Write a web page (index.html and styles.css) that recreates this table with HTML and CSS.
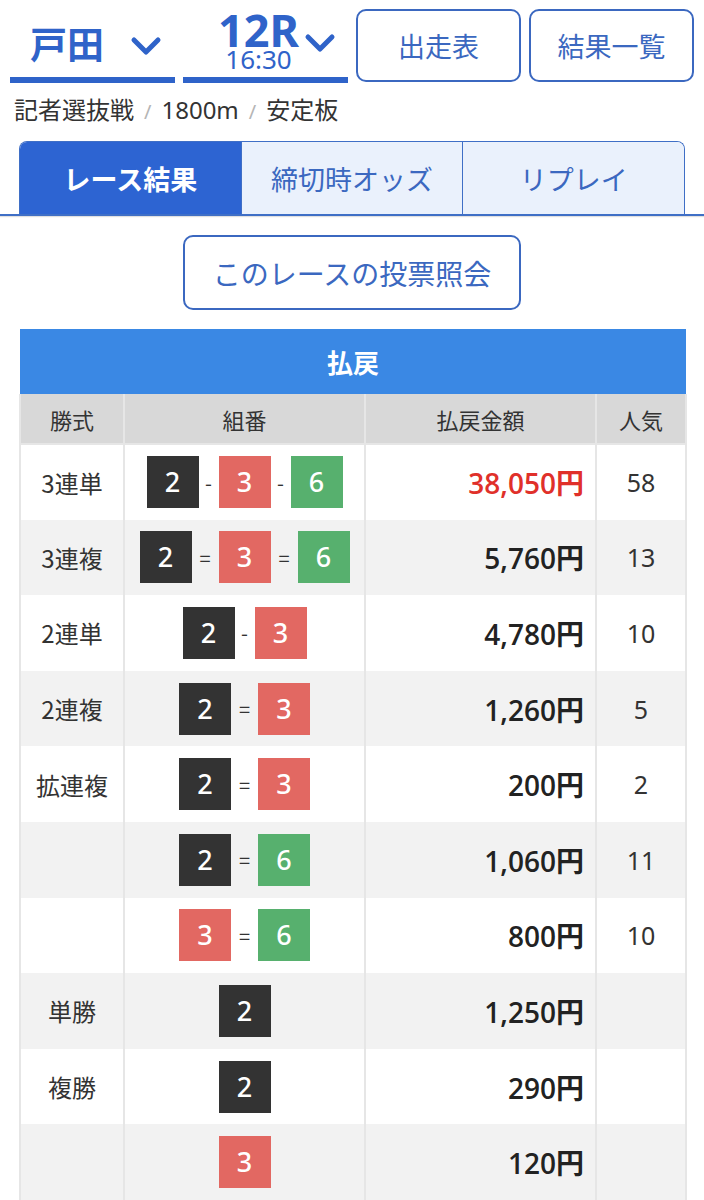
FILE: index.html
```html
<!DOCTYPE html>
<html lang="ja">
<head>
<meta charset="utf-8">
<link rel="stylesheet" href="styles.css">
</head>
<body>
<div class="page">
  <div class="topbar">
    <div class="sel sel-place">
      <span class="place">戸田</span>
      <svg class="chev chev1" width="32" height="22" viewBox="0 0 32 22"><polyline points="4,5 16,17 28,5" fill="none" stroke="#2f63c9" stroke-width="5" stroke-linecap="round" stroke-linejoin="round"/></svg>
    </div>
    <div class="sel sel-race">
      <span class="race"><span class="rno">12R</span><span class="rtime">16:30</span></span>
      <svg class="chev chev2" width="32" height="22" viewBox="0 0 32 22"><polyline points="4,5 16,17 28,5" fill="none" stroke="#2f63c9" stroke-width="5" stroke-linecap="round" stroke-linejoin="round"/></svg>
    </div>
    <a class="btn">出走表</a>
    <a class="btn">結果一覧</a>
  </div>
  <div class="sub">記者選抜戦<span class="sl">/</span>1800m<span class="sl">/</span>安定板</div>
  <div class="tabwrap">
    <div class="tabs">
      <div class="tab active">レース結果</div>
      <div class="tab">締切時オッズ</div>
      <div class="tab">リプレイ</div>
    </div>
  </div>
  <div class="votewrap"><a class="vote">このレースの投票照会</a></div>
  <table class="pay">
    <colgroup><col class="c1"><col class="c2"><col class="c3"><col class="c4"></colgroup>
    <thead>
      <tr><th colspan="4" class="title">払戻</th></tr>
      <tr class="hd"><th>勝式</th><th>組番</th><th>払戻金額</th><th>人気</th></tr>
    </thead>
    <tbody>
      <tr><td class="kind">3連単</td><td class="combo"><span class="b k">2</span><span class="sep">-</span><span class="b r">3</span><span class="sep">-</span><span class="b g">6</span></td><td class="amt red">38,050円</td><td class="pop">58</td></tr>
      <tr class="alt"><td class="kind">3連複</td><td class="combo"><span class="b k">2</span><span class="sep eq">=</span><span class="b r">3</span><span class="sep eq">=</span><span class="b g">6</span></td><td class="amt">5,760円</td><td class="pop">13</td></tr>
      <tr><td class="kind">2連単</td><td class="combo"><span class="b k">2</span><span class="sep">-</span><span class="b r">3</span></td><td class="amt">4,780円</td><td class="pop">10</td></tr>
      <tr class="alt"><td class="kind">2連複</td><td class="combo"><span class="b k">2</span><span class="sep eq">=</span><span class="b r">3</span></td><td class="amt">1,260円</td><td class="pop">5</td></tr>
      <tr><td class="kind">拡連複</td><td class="combo"><span class="b k">2</span><span class="sep eq">=</span><span class="b r">3</span></td><td class="amt">200円</td><td class="pop">2</td></tr>
      <tr class="alt"><td class="kind"></td><td class="combo"><span class="b k">2</span><span class="sep eq">=</span><span class="b g">6</span></td><td class="amt">1,060円</td><td class="pop">11</td></tr>
      <tr><td class="kind"></td><td class="combo"><span class="b r">3</span><span class="sep eq">=</span><span class="b g">6</span></td><td class="amt">800円</td><td class="pop">10</td></tr>
      <tr class="alt"><td class="kind">単勝</td><td class="combo"><span class="b k">2</span></td><td class="amt">1,250円</td><td class="pop"></td></tr>
      <tr><td class="kind">複勝</td><td class="combo"><span class="b k">2</span></td><td class="amt">290円</td><td class="pop"></td></tr>
      <tr class="alt"><td class="kind"></td><td class="combo"><span class="b r">3</span></td><td class="amt">120円</td><td class="pop"></td></tr>
    </tbody>
  </table>
</div>
</body>
</html>
```
FILE: styles.css
```css
* { box-sizing: border-box; }
body {
  margin: 0;
  background: #fff;
  font-family: "Noto Sans CJK JP", "Noto Sans", sans-serif;
  color: #333;
}
.page { width: 704px; }
.topbar {
  display: flex;
  gap: 8px;
  padding: 9px 10px 0 10px;
  height: 83px;
}
.sel {
  width: 165px;
  height: 74px;
  border-bottom: 6px solid #2f63c9;
  display: flex;
  align-items: flex-start;
  color: #2f63c9;
}
.sel-place { padding-left: 20px; }
.place {
  font-size: 37px;
  font-weight: 700;
  line-height: 37px;
  margin-top: 16px;
}
.chev1 { margin-left: 26px; margin-top: 26px; }
.sel-race { padding-left: 35px; }
.race {
  display: flex;
  flex-direction: column;
  align-items: center;
  margin-top: 3px;
}
.rno {
  font-family: "Noto Sans", sans-serif;
  font-size: 45px;
  font-weight: 700;
  line-height: 36px;
}
.rtime {
  font-family: "Noto Sans", sans-serif;
  font-size: 26px;
  line-height: 22px;
  font-weight: 400;
}
.chev2 { margin-left: 5px; margin-top: 23px; }
.btn {
  width: 165px;
  height: 73px;
  border: 2px solid #3b68c0;
  border-radius: 10px;
  display: flex;
  align-items: center;
  justify-content: center;
  font-size: 27px;
  color: #3b68c0;
}
.sub {
  padding: 12px 0 0 14px;
  font-family: "Noto Sans", "Noto Sans CJK JP", sans-serif;
  font-size: 24px;
  line-height: 30px;
  height: 58px;
  color: #333;
}
.sl { color: #b5b5b5; margin: 0 10px; font-size: 20px; }
.tabwrap {
  border-bottom: 2px solid #3f6fc6;
  box-shadow: 0 1px 1px rgba(0,0,0,0.12);
  padding: 0 19px;
}
.tabs {
  display: flex;
  height: 73px;
  border: 1px solid #3f6fc6;
  border-bottom: none;
  border-radius: 8px 8px 0 0;
  overflow: hidden;
}
.tab {
  flex: 1;
  display: flex;
  align-items: center;
  justify-content: center;
  font-size: 27px;
  color: #3b68c0;
  background: #eaf1fc;
  border-left: 1px solid #3f6fc6;
}
.tab:first-child { border-left: none; }
.tab.active { background: #2d64d2; color: #fff; font-weight: 700; }
.votewrap {
  display: flex;
  justify-content: center;
  padding: 19px 0;
}
.vote {
  width: 338px;
  height: 75px;
  border: 2px solid #3b68c0;
  border-radius: 10px;
  display: flex;
  align-items: center;
  justify-content: center;
  font-size: 28px;
  color: #3b68c0;
}
.pay {
  margin-left: 19px;
  width: 666px;
  border-collapse: collapse;
  table-layout: fixed;
}
.c1 { width: 104px; }
.c2 { width: 241px; }
.c3 { width: 231px; }
.c4 { width: 90px; }
.pay th, .pay td { padding: 0; }
.title {
  background: #3a88e4;
  color: #fff;
  font-size: 26px;
  font-weight: 700;
  height: 65px;
  text-align: center;
}
.hd th {
  background: #d8d8d8;
  height: 50px;
  font-size: 22px;
  font-weight: 400;
  color: #333;
  border: 2px solid #e6e6e6;
  border-top: none;
}
.pay tbody td {
  height: 75.6px;
  border-left: 2px solid #e6e6e6;
  border-right: 2px solid #e6e6e6;
  background: #fff;
  vertical-align: middle;
}
.pay tbody tr.alt td { background: #f2f2f2; }
.kind { text-align: center; font-size: 24px; color: #333; }
.combo { text-align: center; white-space: nowrap; font-size: 0; }
.b {
  display: inline-block;
  width: 52px;
  height: 52px;
  line-height: 52px;
  text-align: center;
  color: #fff;
  font-family: "Noto Sans", sans-serif;
  font-size: 27px;
  font-weight: 500;
  vertical-align: middle;
}
.b.k { background: #333; }
.b.r { background: #e26862; }
.b.g { background: #57b06e; }
.sep {
  display: inline-block;
  width: 20px;
  text-align: center;
  font-size: 20px;
  color: #333;
  vertical-align: middle;
}
.sep.eq { width: 27px; }
.amt {
  text-align: right;
  padding-right: 11px !important;
  font-family: "Open Sans", "Noto Sans CJK JP", sans-serif;
  font-size: 28px;
  font-weight: 600;
  color: #222;
}
.amt.red { color: #e0302a; }
.pop { text-align: center; font-size: 25px; color: #333; font-family: "Noto Sans", sans-serif; }
```
